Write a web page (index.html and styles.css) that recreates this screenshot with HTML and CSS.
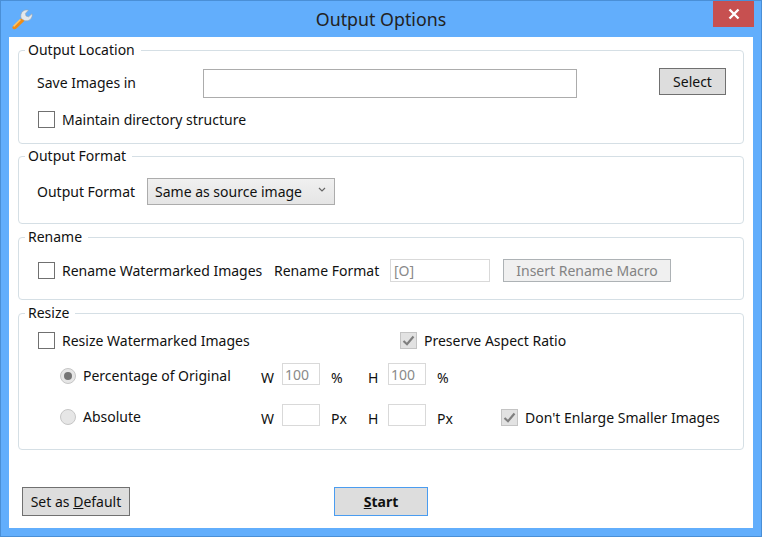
FILE: index.html
```html
<!DOCTYPE html>
<html lang="en">
<head>
    <meta charset="UTF-8">
    <title>Output Options</title>
    <link rel="stylesheet" href="styles.css">
</head>
<body>
    <div class="window">
        <div class="title-bar">
            <svg class="app-icon" width="24" height="24" viewBox="0 0 24 24">
                <path d="M3.2 20.2 L12 11.4 L15 14.2 L6.4 22.6 C5.2 23.6 3.6 23.4 2.8 22.4 C2 21.6 2.2 21.1 3.2 20.2 Z" fill="#f08c14"/>
                <path d="M3.6 20.4 L10.5 13.5" stroke="#fbc56a" stroke-width="1.5" fill="none"/>
                <path d="M11.2 12.4 C10.2 9.6 11 6.6 13.2 5 C14.8 3.9 16.8 3.6 18.4 4.2 L15.4 7.4 L16 10 L18.6 10.8 L22 7.8 C22.6 9.8 21.8 12 20.2 13.4 C18.6 14.8 16.4 15.2 14.4 14.6 Z" fill="#e4e8ec" stroke="#9aa4ad" stroke-width="0.6"/>
            </svg>
            <div class="title">Output Options</div>
            <div class="close-btn">
                <svg width="12" height="12" viewBox="0 0 12 12"><path d="M1.5 1.5 L10.5 10.5 M10.5 1.5 L1.5 10.5" stroke="#fff" stroke-width="2.4"/></svg>
            </div>
        </div>

        <div class="client">
            <fieldset class="group group-location">
                <legend>Output Location</legend>
                <div class="row row-save">
                    <span class="save-label">Save Images in</span>
                    <input type="text" class="path-input">
                    <button class="btn btn-select">Select</button>
                </div>
                <label class="check check-maintain"><span class="box"></span>Maintain directory structure</label>
            </fieldset>

            <fieldset class="group group-format">
                <legend>Output Format</legend>
                <div class="row row-format">
                    <span class="format-label">Output Format</span>
                    <div class="dropdown">
                        <span>Same as source image</span>
                        <svg width="8" height="5" viewBox="0 0 8 5"><path d="M1 1 L4 4 L7 1" stroke="#666" stroke-width="1.2" fill="none"/></svg>
                    </div>
                </div>
            </fieldset>

            <fieldset class="group group-rename">
                <legend>Rename</legend>
                <div class="row row-rename">
                    <label class="check check-rename"><span class="box"></span>Rename Watermarked Images</label>
                    <span class="rename-label">Rename Format</span>
                    <input type="text" class="field rename-input" value="[O]" disabled>
                    <button class="btn btn-macro" disabled>Insert Rename Macro</button>
                </div>
            </fieldset>

            <fieldset class="group group-resize">
                <legend>Resize</legend>
                <div class="row row-resize-top">
                    <label class="check check-resize"><span class="box"></span>Resize Watermarked Images</label>
                    <label class="check"><span class="box box-on"><svg width="13" height="11" viewBox="0 0 13 11"><path d="M1.5 6 L5 9.2 L11.5 1.5" stroke="#7f7f7f" stroke-width="2.2" fill="none"/></svg></span>Preserve Aspect Ratio</label>
                </div>
                <div class="row row-size row-percent">
                    <label class="radio"><span class="dot dot-on"></span>Percentage of Original</label>
                    <span class="dim-w">W</span>
                    <input type="text" class="field dim-input" value="100" disabled>
                    <span class="unit">%</span>
                    <span class="dim-h">H</span>
                    <input type="text" class="field dim-input" value="100" disabled>
                    <span class="unit">%</span>
                </div>
                <div class="row row-size row-absolute">
                    <label class="radio"><span class="dot"></span>Absolute</label>
                    <span class="dim-w">W</span>
                    <input type="text" class="field dim-input" disabled>
                    <span class="unit">Px</span>
                    <span class="dim-h">H</span>
                    <input type="text" class="field dim-input" disabled>
                    <span class="unit">Px</span>
                    <label class="check check-enlarge"><span class="box box-on"><svg width="13" height="11" viewBox="0 0 13 11"><path d="M1.5 6 L5 9.2 L11.5 1.5" stroke="#7f7f7f" stroke-width="2.2" fill="none"/></svg></span>Don't Enlarge Smaller Images</label>
                </div>
            </fieldset>

            <div class="footer">
                <button class="btn btn-default">Set as <u>D</u>efault</button>
                <button class="btn btn-start"><u>S</u>tart</button>
            </div>
        </div>
    </div>
</body>
</html>
```

FILE: styles.css
```css
* {
    box-sizing: border-box;
}

html, body {
    margin: 0;
    padding: 0;
}

body {
    width: 762px;
    height: 537px;
    overflow: hidden;
    font-family: "Noto Sans", "Open Sans", sans-serif;
    font-size: 14px;
    color: #111;
}

.window {
    width: 762px;
    height: 537px;
    background-color: #62aefc;
    border: 1px solid #4a8fd6;
    display: flex;
    flex-direction: column;
}

.title-bar {
    height: 36px;
    flex: none;
    display: grid;
    grid-template-columns: 1fr auto 1fr;
    align-items: start;
}

.app-icon {
    margin: 5px 0 0 9px;
}

.title {
    font-size: 17.8px;
    line-height: 24px;
    margin-top: 6px;
    color: #222;
}

.close-btn {
    justify-self: end;
    width: 41px;
    height: 26px;
    margin-right: 7px;
    background-color: #c75050;
    display: flex;
    align-items: center;
    justify-content: center;
}

.client {
    flex: 1;
    margin: 0 8px 8px 8px;
    padding: 3px 9px 0 9px;
    background-color: #fff;
    display: flex;
    flex-direction: column;
}

.group {
    margin: 0;
    padding: 0;
    border: 1px solid #d5dfe5;
    border-radius: 4px;
    min-width: 0;
}

.group legend {
    margin-left: 6px;
    padding: 0 6px 0 3px;
    line-height: 20px;
}

.group-location {
    height: 104px;
}

.group-format {
    height: 78px;
    margin-top: 2px;
}

.group-rename {
    height: 73px;
    margin-top: 3px;
}

.group-resize {
    height: 147px;
    margin-top: 3px;
}

.row {
    display: flex;
    align-items: center;
}

.check {
    display: flex;
    align-items: center;
    white-space: nowrap;
}

.box {
    width: 17px;
    height: 17px;
    margin-right: 7px;
    border: 1px solid #707070;
    background-color: #fff;
    display: flex;
    align-items: center;
    justify-content: center;
    flex: none;
}

.box-on {
    border-color: #c4c4c4;
    background-color: #e2e2e2;
}

.radio {
    display: flex;
    align-items: center;
    width: 201px;
    padding-top: 3px;
    white-space: nowrap;
}

.dot {
    width: 16px;
    height: 16px;
    margin-right: 7px;
    border: 1px solid #c6c6c6;
    border-radius: 50%;
    background-color: #e6e6e6;
    display: flex;
    align-items: center;
    justify-content: center;
    flex: none;
}

.dot-on::after {
    content: "";
    width: 8px;
    height: 8px;
    border-radius: 50%;
    background-color: #757575;
}

.btn {
    font-family: inherit;
    font-size: 14px;
    color: #111;
    background-color: #dddddd;
    border: 1px solid #707070;
    padding: 0;
}

.field {
    font-family: inherit;
    font-size: 14px;
    color: #8a8a8a;
    background-color: #fff;
    border: 1px solid #d9d9d9;
    outline: none;
    padding: 0 3px;
}

/* output location */
.row-save {
    margin: 9px 0 0 18px;
    align-items: flex-start;
}

.save-label {
    width: 166px;
    line-height: 27px;
}

.path-input {
    width: 374px;
    height: 29px;
    border: 1px solid #acacac;
    background-color: #fff;
    outline: none;
}

.btn-select {
    width: 67px;
    height: 27px;
    margin: -1px 0 0 82px;
}

.check-maintain {
    margin: 12px 0 0 19px;
}

/* output format */
.row-format {
    margin: 12px 0 0 18px;
}

.format-label {
    width: 110px;
}

.dropdown {
    width: 188px;
    height: 27px;
    padding: 0 8px 0 7px;
    border: 1px solid #acacac;
    background: linear-gradient(#f0f0f0, #e5e5e5);
    display: flex;
    align-items: center;
    justify-content: space-between;
}

.dropdown svg {
    margin-top: -5px;
}

/* rename */
.row-rename {
    margin: 12px 0 0 19px;
}

.check-rename {
    width: 236px;
}

.rename-label {
    width: 116px;
}

.rename-input {
    width: 100px;
    height: 23px;
}

.btn-macro {
    width: 168px;
    height: 23px;
    margin-left: 13px;
    background-color: #f0f0f0;
    border-color: #adb2b5;
    color: #838383;
}

/* resize */
.row-resize-top {
    margin: 8px 0 0 19px;
}

.check-resize {
    width: 362px;
}

.row-size {
    padding-left: 41px;
    height: 22px;
}

.row-percent {
    margin-top: 13px;
}

.row-absolute {
    margin-top: 19px;
}

.dim-w {
    width: 21px;
    padding-top: 6px;
}

.dim-h {
    width: 20px;
    padding-top: 6px;
}

.dim-input {
    width: 38px;
    height: 22px;
    padding: 0 2px;
}

.unit {
    width: 48px;
    padding: 6px 0 0 11px;
}

.check-enlarge {
    margin: 5px 0 0 27px;
}

/* bottom buttons */
.footer {
    margin-top: 37px;
    padding-left: 4px;
    display: flex;
}

.btn-default {
    width: 108px;
    height: 29px;
}

.btn-start {
    width: 94px;
    height: 29px;
    margin-left: 204px;
    font-weight: bold;
    border-color: #4a9cf0;
}
```
